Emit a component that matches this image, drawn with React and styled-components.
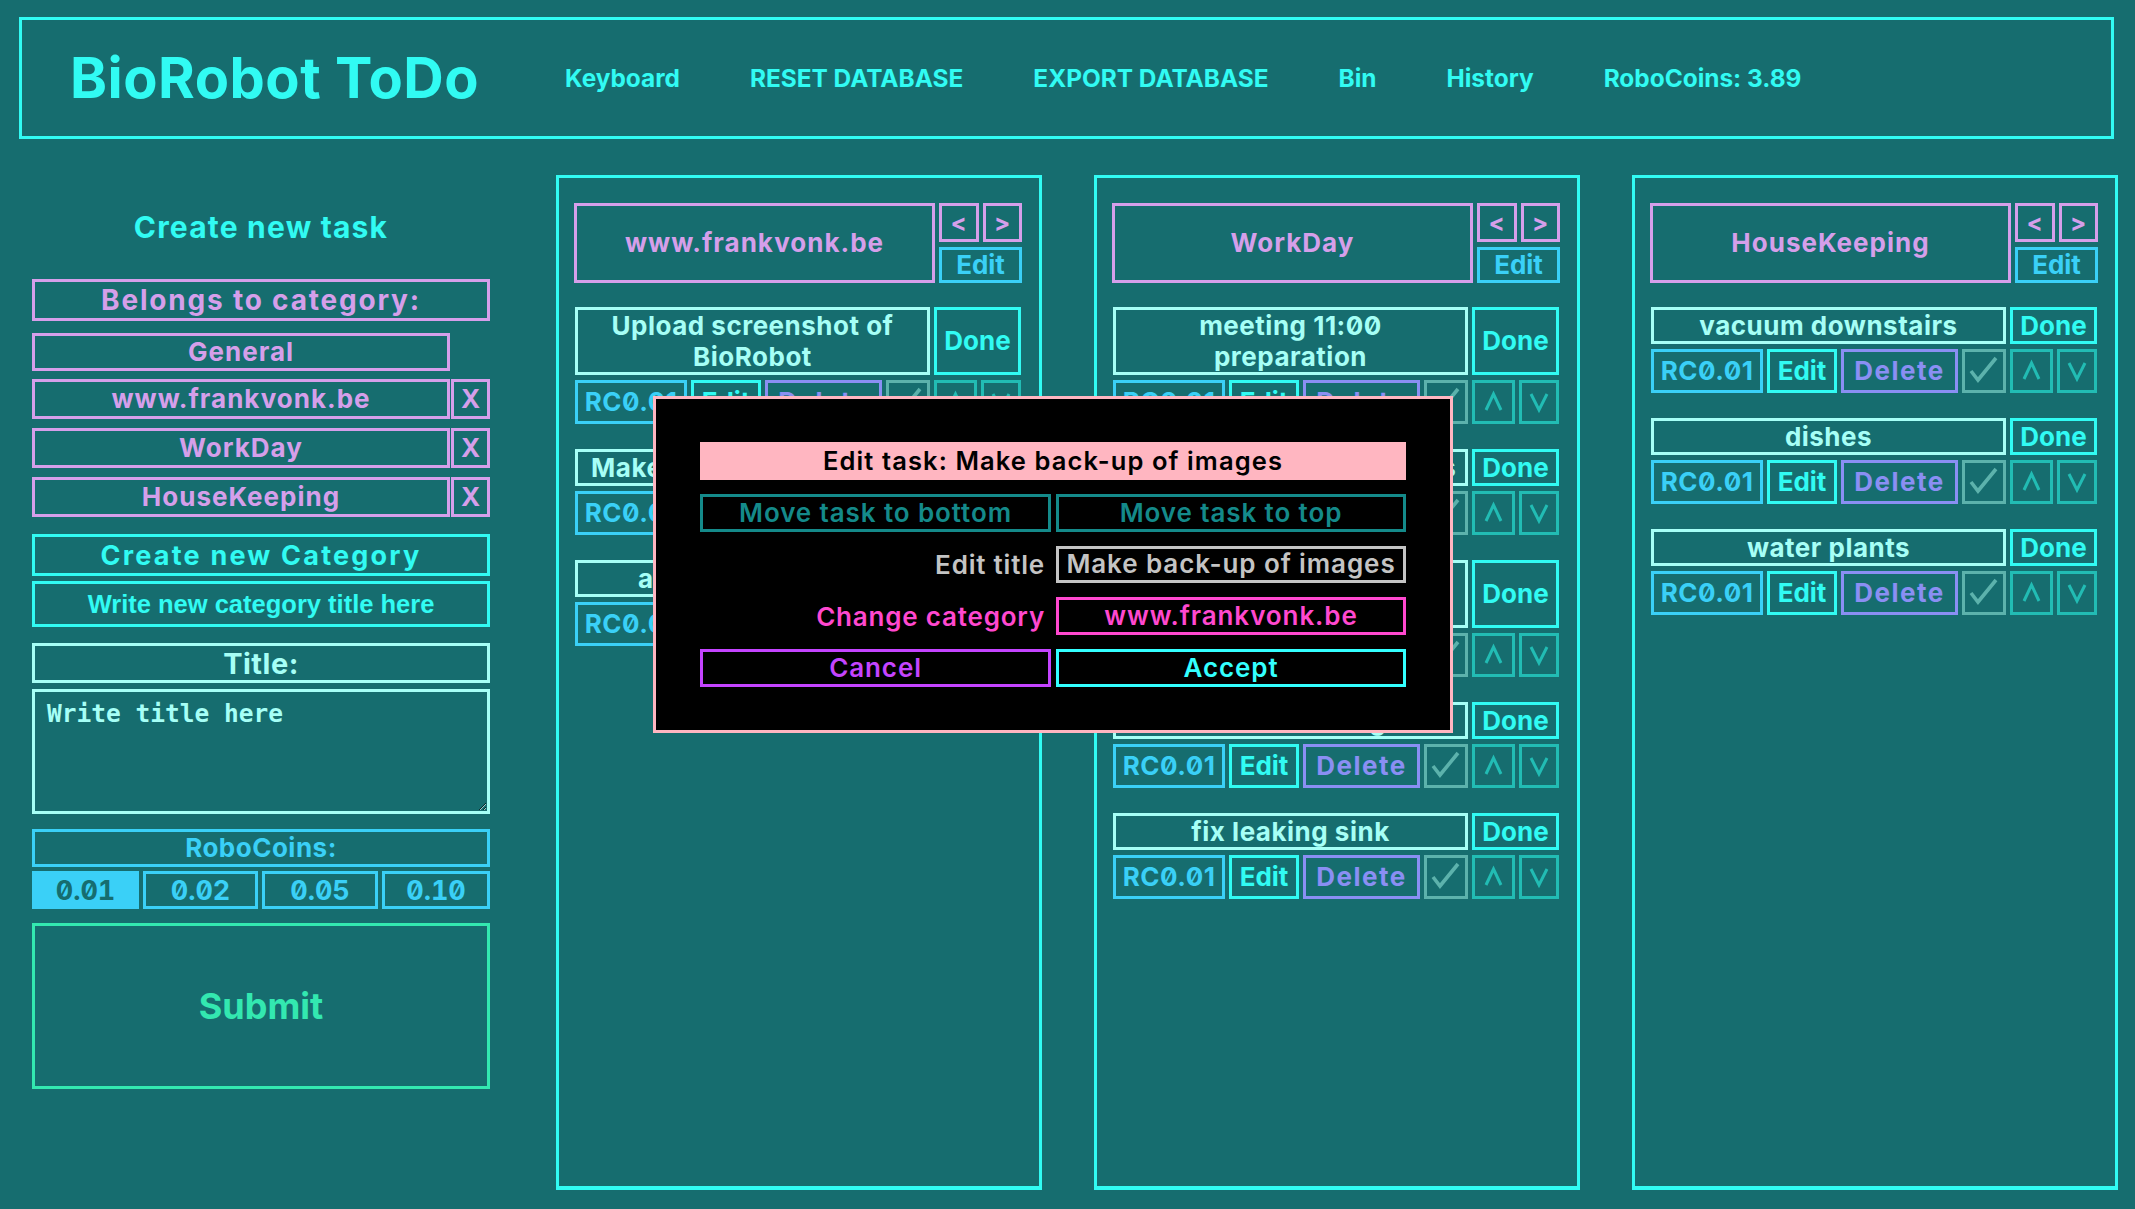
import React from "react";
import styled, { createGlobalStyle } from "styled-components";

const BG = "#166d6f";
const CYAN = "#31fbf3";
const PURPLE = "#d59fea";
const SKY = "#3ad0f7";
const MINT = "#a6fff6";
const LAVENDER = "#8a8ff3";
const SAGE = "#5cb2ac";
const TEAL = "#22bcb4";
const GREEN = "#33e8b0";
const PINK = "#ffb6c1";

const GlobalStyle = createGlobalStyle`
  * { box-sizing: border-box; }
  body {
    margin: 0;
    background: ${BG};
    font-family: Inter, "Noto Sans", sans-serif;
    font-feature-settings: "zero" 1;
  }
`;

const Page = styled.div`
  position: relative;
  min-height: 1209px;
  padding: 17px 21px 0 19px;
`;

const Header = styled.header`
  height: 122px;
  border: 3px solid ${CYAN};
  display: flex;
  align-items: center;
  padding-left: 48px;
`;

const Logo = styled.h1`
  margin: 0 86px 0 0;
  font-size: 56px;
  font-weight: 700;
  letter-spacing: 0.5px;
  color: ${CYAN};
`;

const Nav = styled.nav`
  display: flex;
  gap: 70px;
`;

const NavItem = styled.span`
  font-size: 24.4px;
  font-weight: 700;
  color: ${CYAN};
`;

const Main = styled.main`
  display: flex;
  margin-top: 36px;
  padding-left: 13px;
`;

const Sidebar = styled.aside`
  width: 458px;
  margin-right: 66px;
  display: flex;
  flex-direction: column;
`;

const Heading = styled.h2`
  margin: 34px 0 33px;
  height: 37px;
  line-height: 37px;
  text-align: center;
  font-size: 30px;
  font-weight: 700;
  letter-spacing: 1.2px;
  color: ${CYAN};
`;

const Label = styled.div`
  height: ${(p) => p.$h || 40}px;
  margin-top: ${(p) => p.$mt || 0}px;
  border: 3px solid ${(p) => p.$color};
  color: ${(p) => p.$color};
  display: flex;
  align-items: center;
  justify-content: center;
  font-size: ${(p) => p.$size || 26}px;
  font-weight: 700;
  letter-spacing: ${(p) => (p.$ls === undefined ? 1 : p.$ls)}px;
  line-height: 1;
`;

const CategoryRow = styled.div`
  display: flex;
  gap: 1px;
  margin-top: ${(p) => p.$mt}px;
  height: ${(p) => p.$h}px;
`;

const CategoryName = styled(Label)`
  width: 418px;
  height: 100%;
`;

const RemoveButton = styled(Label)`
  flex: 1;
  height: 100%;
  letter-spacing: 0;
`;

const CategoryInput = styled.input`
  height: 46px;
  margin-top: 5px;
  border: 3px solid ${CYAN};
  background: transparent;
  text-align: center;
  font-family: "Liberation Sans", Arial, sans-serif;
  font-weight: 700;
  font-size: 25.5px;
  color: ${CYAN};
  outline: none;
  &::placeholder { color: ${CYAN}; opacity: 1; }
`;

const TitleArea = styled.textarea`
  height: 125px;
  margin-top: 6px;
  border: 3px solid ${MINT};
  background: transparent;
  padding: 7px 12px;
  font-family: "DejaVu Sans Mono", monospace;
  font-weight: 700;
  font-size: 24.5px;
  color: ${MINT};
  outline: none;
  &::placeholder { color: ${MINT}; opacity: 1; }
`;

const CoinRow = styled.div`
  display: flex;
  gap: 4px;
  margin-top: 4px;
`;

const CoinButton = styled.button`
  width: ${(p) => p.$w}px;
  height: 38px;
  border: 3px solid ${SKY};
  background: ${(p) => (p.$active ? SKY : "transparent")};
  color: ${(p) => (p.$active ? BG : SKY)};
  font-family: Inter, sans-serif;
  font-feature-settings: "zero" 1, "tnum" 1;
  font-size: 27px;
  font-weight: 700;
  line-height: 1;
  padding: 0;
`;

const SubmitButton = styled.button`
  height: 166px;
  margin-top: 14px;
  border: 3px solid ${GREEN};
  background: transparent;
  color: ${GREEN};
  font-family: Inter, sans-serif;
  font-size: 36px;
  font-weight: 700;
`;

const Column = styled.section`
  width: 486px;
  height: 1015px;
  margin-right: 52px;
  border: 3px solid ${CYAN};
  border-bottom-width: 4px;
  padding: 25px 17px 0 15px;
`;

const ColumnHeader = styled.div`
  display: flex;
  gap: 4px;
  height: 80px;
  margin-bottom: 24px;
`;

const CategoryTitle = styled(Label)`
  flex: 1;
  height: 100%;
`;

const HeaderControls = styled.div`
  width: 83px;
  display: flex;
  flex-direction: column;
  gap: 5px;
`;

const ArrowRow = styled.div`
  display: flex;
  gap: 4px;
  height: 39px;
`;

const ArrowButton = styled(Label)`
  flex: 1;
  height: 100%;
  font-size: 24px;
  letter-spacing: 0;
`;

const HeaderEdit = styled(Label)`
  height: 36px;
  letter-spacing: 0;
`;

const Task = styled.div`
  margin: 0 1px 25px;
`;

const TitleRow = styled.div`
  display: flex;
  gap: 4px;
  margin-bottom: 5px;
`;

const TaskTitle = styled.div`
  flex: 1;
  border: 3px solid ${MINT};
  color: ${MINT};
  text-align: center;
  white-space: nowrap;
  overflow: hidden;
  font-size: 26px;
  font-weight: 700;
  letter-spacing: 0.5px;
  line-height: 31px;
`;

const DoneButton = styled(Label)`
  width: 87px;
  height: auto;
  letter-spacing: 0;
`;

const ActionRow = styled.div`
  display: flex;
  gap: 4px;
  height: 44px;
`;

const ActionButton = styled(Label)`
  width: ${(p) => p.$w}px;
  height: 100%;
`;

const Icon = styled.svg`
  width: 100%;
  height: 100%;
  display: block;
`;

const Modal = styled.div`
  position: absolute;
  left: 653px;
  top: 396px;
  width: 800px;
  height: 337px;
  background: #000;
  border: 3px solid ${PINK};
  padding: 43px 44px;
  display: flex;
  flex-direction: column;
  gap: 14px;
`;

const ModalTitle = styled.div`
  height: 38px;
  background: ${PINK};
  color: #000;
  display: flex;
  align-items: center;
  justify-content: center;
  font-size: 25.5px;
  font-weight: 600;
  letter-spacing: 1.1px;
`;

const ModalRow = styled.div`
  display: grid;
  grid-template-columns: 351px 1fr;
  gap: 5px;
  height: 38px;
`;

const ModalBox = styled.div`
  border: 3px solid ${(p) => p.$color};
  color: ${(p) => p.$color};
  display: flex;
  align-items: center;
  justify-content: center;
  font-size: 26px;
  font-weight: 600;
  letter-spacing: 0.9px;
  line-height: 1;
  white-space: nowrap;
`;

const FieldLabel = styled.div`
  color: ${(p) => p.$color};
  display: flex;
  align-items: center;
  justify-content: flex-end;
  padding-right: 6px;
  font-size: 26px;
  font-weight: 600;
  letter-spacing: 0.8px;
`;

const Check = () => (
  <Icon viewBox="0 0 38 38">
    <polyline points="6,19 13,28 31,6" fill="none" stroke={SAGE} strokeWidth="3.6" />
  </Icon>
);

const Up = () => (
  <Icon viewBox="0 0 37 38">
    <polyline points="11,27 18.5,11 26,27" fill="none" stroke={TEAL} strokeWidth="3" />
  </Icon>
);

const Down = () => (
  <Icon viewBox="0 0 34 38">
    <polyline points="9,11 17,27 25,11" fill="none" stroke={TEAL} strokeWidth="3" />
  </Icon>
);

const columns = [
  {
    name: "www.frankvonk.be",
    tasks: [
      { lines: ["Upload screenshot of", "BioRobot"] },
      { lines: ["Make back-up of images"] },
      { lines: ["add contact page"] },
    ],
  },
  {
    name: "WorkDay",
    tasks: [
      { lines: ["meeting 11:00", "preparation"] },
      { lines: ["check and answer emails"] },
      { lines: ["prepare slides for", "presentation"] },
      { lines: ["lunch with colleagues"] },
      { lines: ["fix leaking sink"] },
    ],
  },
  {
    name: "HouseKeeping",
    tasks: [
      { lines: ["vacuum downstairs"] },
      { lines: ["dishes"] },
      { lines: ["water plants"] },
    ],
  },
];

const TaskCard = ({ lines }) => (
  <Task>
    <TitleRow>
      <TaskTitle>
        {lines.map((l, i) => (
          <div key={i}>{l}</div>
        ))}
      </TaskTitle>
      <DoneButton $color={CYAN}>Done</DoneButton>
    </TitleRow>
    <ActionRow>
      <ActionButton $color={SKY} $w={112} $ls={0.5}>RC0.01</ActionButton>
      <ActionButton $color={CYAN} $w={70} $ls={0}>Edit</ActionButton>
      <ActionButton $color={LAVENDER} $w={117} $ls={1.5}>Delete</ActionButton>
      <ActionButton $color={SAGE} $w={44}><Check /></ActionButton>
      <ActionButton $color={TEAL} $w={43}><Up /></ActionButton>
      <ActionButton $color={TEAL} $w={40}><Down /></ActionButton>
    </ActionRow>
  </Task>
);

export default function App() {
  return (
    <Page>
      <GlobalStyle />
      <Header>
        <Logo>BioRobot ToDo</Logo>
        <Nav>
          <NavItem>Keyboard</NavItem>
          <NavItem>RESET DATABASE</NavItem>
          <NavItem>EXPORT DATABASE</NavItem>
          <NavItem>Bin</NavItem>
          <NavItem>History</NavItem>
          <NavItem>RoboCoins: 3.89</NavItem>
        </Nav>
      </Header>
      <Main>
        <Sidebar>
          <Heading>Create new task</Heading>
          <Label $color={PURPLE} $h={42} $size={28} $ls={1.8}>Belongs to category:</Label>
          <CategoryRow $mt={12} $h={38}>
            <CategoryName $color={PURPLE}>General</CategoryName>
          </CategoryRow>
          {["www.frankvonk.be", "WorkDay", "HouseKeeping"].map((c) => (
            <CategoryRow key={c} $mt={c === "www.frankvonk.be" ? 8 : 9} $h={40}>
              <CategoryName $color={PURPLE}>{c}</CategoryName>
              <RemoveButton $color={PURPLE}>X</RemoveButton>
            </CategoryRow>
          ))}
          <Label $color={CYAN} $h={42} $mt={17} $size={27} $ls={2.2}>Create new Category</Label>
          <CategoryInput placeholder="Write new category title here" />
          <Label $color={MINT} $h={40} $mt={16} $size={29} $ls={0.5}>Title:</Label>
          <TitleArea placeholder="Write title here" />
          <Label $color={SKY} $h={38} $mt={15} $size={26} $ls={0.5}>RoboCoins:</Label>
          <CoinRow>
            <CoinButton $w={107} $active>0.01</CoinButton>
            <CoinButton $w={115}>0.02</CoinButton>
            <CoinButton $w={116}>0.05</CoinButton>
            <CoinButton $w={108}>0.10</CoinButton>
          </CoinRow>
          <SubmitButton>Submit</SubmitButton>
        </Sidebar>
        {columns.map((col) => (
          <Column key={col.name}>
            <ColumnHeader>
              <CategoryTitle $color={PURPLE}>{col.name}</CategoryTitle>
              <HeaderControls>
                <ArrowRow>
                  <ArrowButton $color={PURPLE}>&lt;</ArrowButton>
                  <ArrowButton $color={PURPLE}>&gt;</ArrowButton>
                </ArrowRow>
                <HeaderEdit $color={SKY}>Edit</HeaderEdit>
              </HeaderControls>
            </ColumnHeader>
            {col.tasks.map((t) => (
              <TaskCard key={t.lines.join(" ")} {...t} />
            ))}
          </Column>
        ))}
      </Main>
      <Modal>
        <ModalTitle>Edit task: Make back-up of images</ModalTitle>
        <ModalRow>
          <ModalBox $color="#148a8a">Move task to bottom</ModalBox>
          <ModalBox $color="#148a8a">Move task to top</ModalBox>
        </ModalRow>
        <ModalRow>
          <FieldLabel $color="#c4c4c4">Edit title</FieldLabel>
          <ModalBox $color="#c4c4c4">Make back-up of images</ModalBox>
        </ModalRow>
        <ModalRow>
          <FieldLabel $color="#ff48cf">Change category</FieldLabel>
          <ModalBox $color="#ff48cf">www.frankvonk.be</ModalBox>
        </ModalRow>
        <ModalRow>
          <ModalBox $color="#c444ff">Cancel</ModalBox>
          <ModalBox $color="#33ffff">Accept</ModalBox>
        </ModalRow>
      </Modal>
    </Page>
  );
}
